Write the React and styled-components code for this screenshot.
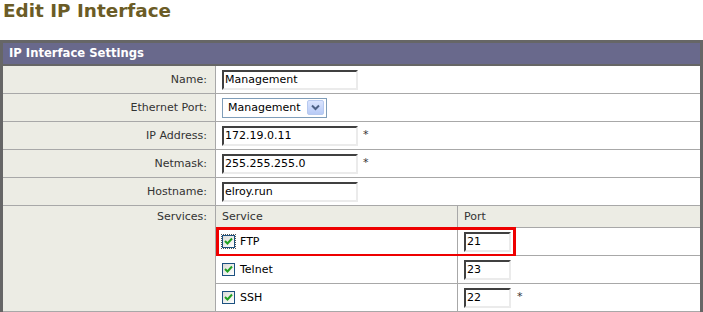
import React from "react";
import styled, { createGlobalStyle } from "styled-components";

const GlobalStyle = createGlobalStyle`
  html, body { margin: 0; padding: 0; background: #fff; }
  body {
    font-family: Verdana, "DejaVu Sans", sans-serif;
    font-size: 11px;
    color: #333;
  }
  * { box-sizing: border-box; }
`;

const Page = styled.div`
  width: 703px;
`;

const Title = styled.h1`
  margin: 0 0 19px 3px;
  font-size: 18.4px;
  line-height: 21px;
  font-weight: bold;
  color: #6b5c26;
`;

const Panel = styled.div`
  border: 3px solid #666;
  border-bottom: none;
`;

const PanelHeader = styled.div`
  height: 23px;
  background: #69698c;
  color: #fff;
  font-weight: bold;
  font-size: 11.6px;
  line-height: 21px;
  padding-left: 6px;
  border-bottom: 2px solid #666;
`;

const Row = styled.div`
  display: grid;
  grid-template-columns: 213px 1fr;
  border-bottom: 1px solid #a8a8a8;
`;

const Label = styled.div`
  background: #ecece4;
  border-right: 1px solid #a8a8a8;
  display: flex;
  justify-content: flex-end;
  align-items: ${(p) => (p.$top ? "flex-start" : "center")};
  padding: ${(p) => (p.$top ? "4px 8px 0 0" : "0 8px 0 0")};
  line-height: 13px;
  color: #333;
`;

const Value = styled.div`
  height: 27px;
  display: flex;
  align-items: center;
  gap: 4px;
  padding-left: 6px;
`;

const SubTable = styled.div`
  display: flex;
  flex-direction: column;
`;

const SubRow = styled.div`
  position: relative;
  display: grid;
  grid-template-columns: 242px 1fr;
  height: ${(p) => (p.$head ? 22 : 28)}px;
  border-bottom: 1px solid #a8a8a8;
  background: ${(p) => (p.$head ? "#ecece4" : "#fff")};
  &:last-child { border-bottom: none; height: 27px; }
`;

const SubCell = styled.div`
  display: flex;
  align-items: center;
  gap: 5px;
  padding-left: 6px;
  border-right: ${(p) => (p.$first ? "1px solid #a8a8a8" : "none")};
  color: ${(p) => (p.$head ? "#333" : "#000")};
`;

const TextInput = styled.input`
  width: ${(p) => p.$w}px;
  height: 20px;
  margin: 0;
  padding: 0 0 0 1px;
  border-style: solid;
  border-width: 2px 2px 2px 2px;
  border-color: #404040 #ebebeb #ebebeb #404040;
  background: #fff;
  font: 11px Verdana, "DejaVu Sans", sans-serif;
  color: #000;
  outline: none;
`;

const Required = styled.span`
  color: #333;
  font-size: 11px;
  margin-left: 1px;
  align-self: flex-start;
  margin-top: 6px;
`;

const Select = styled.div`
  width: 105px;
  height: 20px;
  border: 1px solid #7f9db9;
  background: #fff;
  display: flex;
  align-items: center;
  justify-content: space-between;
  padding: 0 2px 0 5px;
  color: #000;
`;

const SelectButton = styled.span`
  width: 17px;
  height: 15px;
  border: 1px solid #b7c9ef;
  border-radius: 2px;
  background: linear-gradient(#dae4fe, #b8cbf6);
  display: flex;
  align-items: center;
  justify-content: center;
`;

const Check = styled.span`
  width: 13px;
  height: 13px;
  flex: none;
  border: 1px solid #1c5180;
  background: linear-gradient(135deg, #dcdcd7, #fff);
  display: inline-flex;
  align-items: center;
  justify-content: center;
  outline: ${(p) => (p.$focus ? "1px dotted #555" : "none")};
  outline-offset: 0px;
`;

const Highlight = styled.div`
  position: absolute;
  left: 0;
  top: -1px;
  width: 300px;
  height: 30px;
  border: 3px solid #ee0000;
  pointer-events: none;
`;

const Chevron = () => (
  <svg width="9" height="7" viewBox="0 0 9 7">
    <path d="M1 1.5 L4.5 5 L8 1.5" fill="none" stroke="#4d6185" strokeWidth="2" />
  </svg>
);

const Tick = () => (
  <svg width="11" height="11" viewBox="0 0 11 11">
    <path d="M2 5 L4.5 7.5 L9 2.5" fill="none" stroke="#21a121" strokeWidth="2" />
  </svg>
);

const fields = [
  { label: "Name:", value: "Management", req: false },
  { label: "Ethernet Port:", select: "Management" },
  { label: "IP Address:", value: "172.19.0.11", req: true },
  { label: "Netmask:", value: "255.255.255.0", req: true },
  { label: "Hostname:", value: "elroy.run", req: false },
];

const services = [
  { name: "FTP", port: "21", focus: true },
  { name: "Telnet", port: "23" },
  { name: "SSH", port: "22", req: true },
];

export default function App() {
  return (
    <Page>
      <GlobalStyle />
      <Title>Edit IP Interface</Title>
      <Panel>
        <PanelHeader>IP Interface Settings</PanelHeader>
        {fields.map((f) => (
          <Row key={f.label}>
            <Label>{f.label}</Label>
            <Value>
              {f.select ? (
                <Select>
                  <span>{f.select}</span>
                  <SelectButton>
                    <Chevron />
                  </SelectButton>
                </Select>
              ) : (
                <TextInput $w={136} value={f.value} readOnly />
              )}
              {f.req && <Required>*</Required>}
            </Value>
          </Row>
        ))}
        <Row>
          <Label $top>Services:</Label>
          <SubTable>
            <SubRow $head>
              <SubCell $first $head>Service</SubCell>
              <SubCell $head>Port</SubCell>
            </SubRow>
            {services.map((s) => (
              <SubRow key={s.name}>
                <SubCell $first>
                  <Check $focus={s.focus}>
                    <Tick />
                  </Check>
                  {s.name}
                </SubCell>
                <SubCell>
                  <TextInput $w={47} value={s.port} readOnly />
                  {s.req && <Required>*</Required>}
                </SubCell>
                {s.focus && <Highlight />}
              </SubRow>
            ))}
          </SubTable>
        </Row>
      </Panel>
    </Page>
  );
}
